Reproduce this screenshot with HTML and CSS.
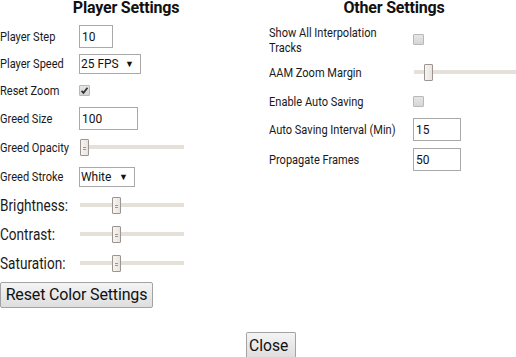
FILE: index.html
```html
<!DOCTYPE html>
<html>
<head>
<meta charset="utf-8">
<link rel="stylesheet" href="styles.css">
</head>
<body>
<div class="dialog">
  <div class="columns">
    <section class="col left">
      <h2 class="heading">Player Settings</h2>
      <div class="row r1"><span class="label"><span class="t">Player Step</span></span><span class="input w34"><span class="v">10</span></span></div>
      <div class="row r2"><span class="label"><span class="t">Player Speed</span></span><span class="select w62"><span class="v">25 FPS</span><span class="arrow">▼</span></span></div>
      <div class="row r3"><span class="label"><span class="t">Reset Zoom</span></span><span class="check checked"><svg viewBox="0 0 11 11" width="11" height="11"><path d="M2.5 5.8 L4.5 7.8 L8.5 2.8" fill="none" stroke="#333" stroke-width="1.8"/></svg></span></div>
      <div class="row r4"><span class="label"><span class="t">Greed Size</span></span><span class="input w59"><span class="v">100</span></span></div>
      <div class="row r4"><span class="label"><span class="t">Greed Opacity</span></span><span class="slider"><span class="track"></span><span class="thumb" style="left:0px"><i></i></span></span></div>
      <div class="row r4"><span class="label"><span class="t">Greed Stroke</span></span><span class="select w56"><span class="v">White</span><span class="arrow">▼</span></span></div>
      <div class="row r4"><span class="label big"><span class="t">Brightness:</span></span><span class="slider"><span class="track"></span><span class="thumb" style="left:32px"><i></i></span></span></div>
      <div class="row r4"><span class="label big"><span class="t">Contrast:</span></span><span class="slider"><span class="track"></span><span class="thumb" style="left:32px"><i></i></span></span></div>
      <div class="row r4"><span class="label big"><span class="t">Saturation:</span></span><span class="slider"><span class="track"></span><span class="thumb" style="left:32px"><i></i></span></span></div>
      <div class="btnrow"><span class="button reset">Reset Color Settings</span></div>
    </section>
    <section class="col right">
      <h2 class="heading">Other Settings</h2>
      <div class="rrow q1"><span class="rlabel"><span class="t">Show All Interpolation Tracks</span></span><span class="check"></span></div>
      <div class="rrow q2"><span class="rlabel"><span class="t">AAM Zoom Margin</span></span><span class="slider wide"><span class="track"></span><span class="thumb" style="left:10px"></span></span></div>
      <div class="rrow q3"><span class="rlabel"><span class="t">Enable Auto Saving</span></span><span class="check"></span></div>
      <div class="rrow q4"><span class="rlabel"><span class="t">Auto Saving Interval (Min)</span></span><span class="input w48"><span class="v">15</span></span></div>
      <div class="rrow q5"><span class="rlabel"><span class="t">Propagate Frames</span></span><span class="input w48"><span class="v">50</span></span></div>
    </section>
  </div>
  <div class="footer"><span class="button close"><span class="v">Close</span></span></div>
</div>
</body>
</html>
```
FILE: styles.css
```css
html, body {
  margin: 0;
  padding: 0;
  background: #fff;
}
body {
  width: 516px;
  height: 357px;
  overflow: hidden;
  font-family: "Roboto", sans-serif;
  color: #222;
}
.dialog {
  display: flex;
  flex-direction: column;
  height: 357px;
}
.columns {
  display: flex;
}
.col {
  display: flex;
  flex-direction: column;
}
.left {
  width: 258px;
}
.right {
  width: 258px;
  padding-left: 11px;
  box-sizing: border-box;
}
.heading {
  margin: 0;
  height: 22px;
  font-family: "Roboto", sans-serif;
  font-weight: 700;
  font-size: 16px;
  letter-spacing: -0.2px;
  line-height: 15px;
  text-align: center;
  color: #111;
}
.left .heading {
  padding-right: 6px;
}
.right .heading {
  padding-left: 3px;
}
.t {
  display: inline-block;
  white-space: nowrap;
  transform: scaleX(0.85);
  transform-origin: left center;
}
.v {
  display: inline-block;
  white-space: nowrap;
  transform: scaleX(0.92);
  transform-origin: left center;
}
.row {
  display: flex;
  align-items: center;
}
.r1 { height: 28px; }
.r2 { height: 27px; }
.r3 { height: 27px; }
.r4 { height: 29px; }
.label {
  width: 79px;
  flex: none;
  font-size: 13px;
  color: #1a1a1a;
  white-space: nowrap;
}
.label.big {
  font-size: 16px;
}
.input {
  box-sizing: border-box;
  height: 23px;
  border: 1px solid #a9a9a9;
  padding: 0 2px;
  font-size: 13px;
  line-height: 21px;
  background: #fff;
  color: #111;
}
.w34 { width: 34px; }
.w59 { width: 59px; }
.w48 { width: 48px; }
.select {
  box-sizing: border-box;
  height: 20px;
  border: 1px solid #a9a9a9;
  padding: 0 6px 0 1px;
  font-size: 13px;
  line-height: 18px;
  background: #fff;
  color: #111;
  display: flex;
  justify-content: space-between;
  align-items: center;
  white-space: nowrap;
}
.w62 { width: 62px; }
.w56 { width: 56px; }
.arrow {
  font-size: 9px;
  color: #111;
}
.check {
  box-sizing: border-box;
  width: 11px;
  height: 11px;
  border: 1px solid #b8b8b8;
  border-radius: 1px;
  background: linear-gradient(#e6e6e6, #d6d6d6);
  display: block;
  position: relative;
}
.check svg {
  position: absolute;
  left: -1px;
  top: -1px;
}
.slider {
  position: relative;
  width: 104px;
  height: 17px;
  margin-left: 1px;
}
.slider.wide {
  width: 103px;
}
.track {
  position: absolute;
  left: 0;
  right: 0;
  top: 6px;
  height: 4px;
  background: #e6e0db;
}
.thumb {
  position: absolute;
  top: 0;
  width: 9px;
  height: 17px;
  box-sizing: border-box;
  border: 1px solid #9c948e;
  border-radius: 1px;
  background: linear-gradient(90deg, #f6f4f2, #e8e4e0);
}
.thumb i {
  position: absolute;
  left: 2px;
  top: 7px;
  width: 3px;
  height: 1px;
  border-top: 1px solid #a09890;
  border-bottom: 1px solid #a09890;
}
.btnrow {
  margin-top: 4px;
}
.button {
  display: inline-block;
  box-sizing: border-box;
  border: 1px solid #a3a3a3;
  border-radius: 2px;
  background: linear-gradient(#f4f4f4, #dedede);
  font-family: "Roboto", sans-serif;
  font-size: 16px;
  color: #111;
  height: 26px;
  line-height: 24px;
  text-align: center;
  white-space: nowrap;
}
.button.reset {
  width: 153px;
  letter-spacing: -0.15px;
}
.rrow {
  display: flex;
  align-items: center;
}
.q1 { height: 35px; }
.q2 { height: 30px; }
.q3 { height: 28px; }
.q4 { height: 29px; }
.q5 { height: 31px; }
.rlabel {
  width: 144px;
  flex: none;
  font-size: 13px;
  line-height: 15px;
  color: #1a1a1a;
}
.q1 .t {
  white-space: normal;
  width: 140px;
}
.footer {
  margin-top: auto;
  display: flex;
  justify-content: center;
  padding-left: 25px;
}
.button.close {
  width: 50px;
  height: 25px;
  border-bottom: none;
  border-radius: 2px 2px 0 0;
  font-size: 17px;
}
```
